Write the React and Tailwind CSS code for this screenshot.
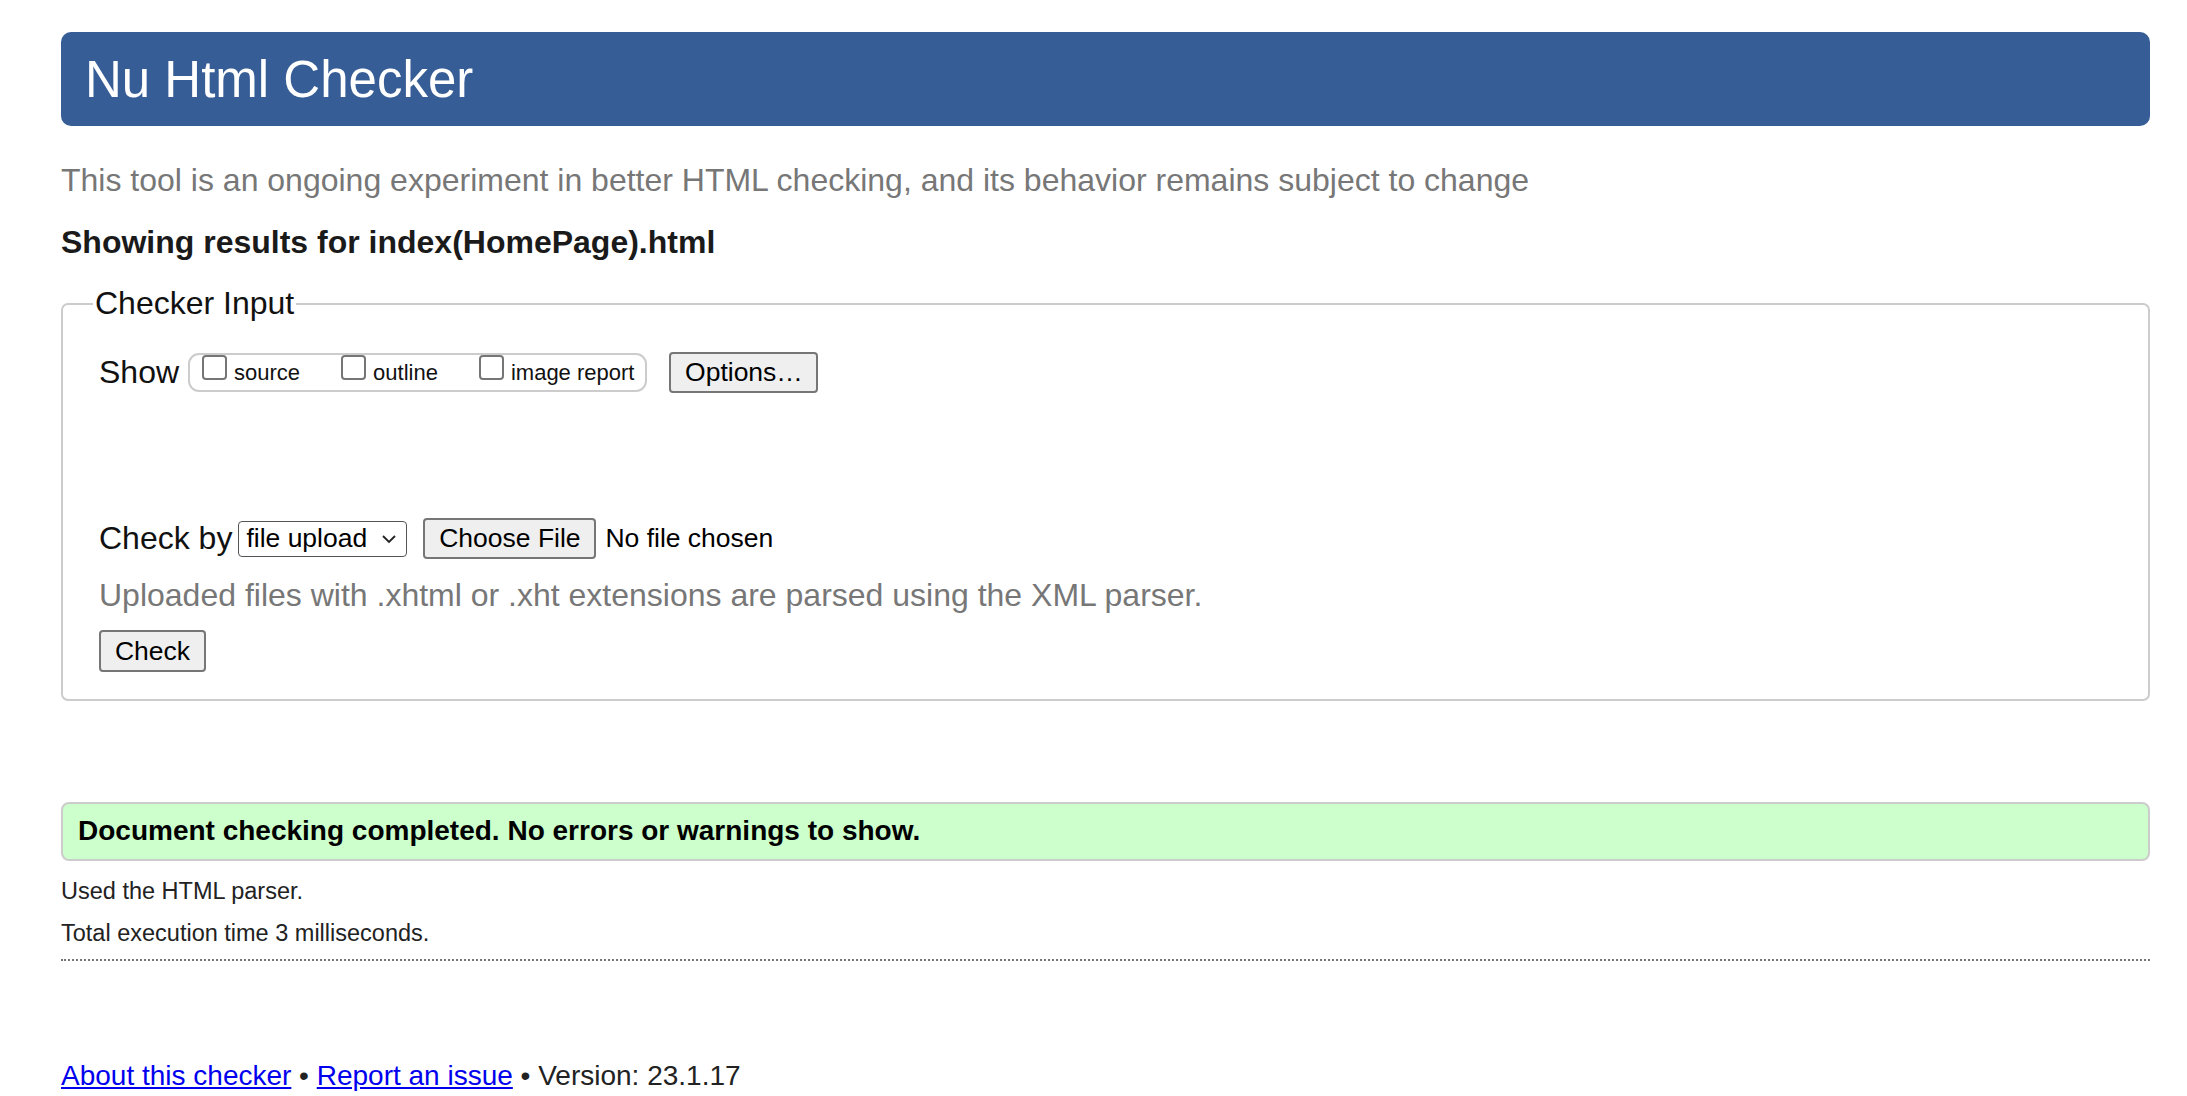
import React from "react";

function Box({ label }) {
  return (
    <span className="flex items-baseline gap-[7px]">
      <span className="inline-block w-[25px] h-[25px] border-2 border-[#767676] rounded-[4px] bg-white"></span>
      <span className="text-[22px] leading-[26px] text-[#111]">{label}</span>
    </span>
  );
}

function Btn({ children, className = "" }) {
  return (
    <button
      type="button"
      className={
        "h-[41px] border-2 border-[#767676] rounded-[4px] bg-[#efefef] text-[26.5px] leading-none text-black flex items-center justify-center " +
        className
      }
    >
      {children}
    </button>
  );
}

export default function App() {
  return (
    <div className="min-h-[1096px] bg-white pl-[61px] pr-[37px] pt-[32px] font-['Liberation_Sans',Arial,sans-serif] text-[#222]">
      <div className="h-[94px] rounded-[10px] bg-[#365d95] flex items-center pl-[24px]">
        <h1 className="text-[51px] leading-none text-white">Nu Html Checker</h1>
      </div>

      <p className="mt-[36px] text-[32px] leading-[37px] text-[#777]">
        This tool is an ongoing experiment in better HTML checking, and its behavior remains subject to change
      </p>

      <p className="mt-[25px] text-[32px] leading-[37px] font-bold text-[#1a1a1a]">
        Showing results for index(HomePage).html
      </p>

      <fieldset className="mt-[24px] border-2 border-[#cccccc] rounded-[7px] px-[30px] pt-[30px] pb-[27px]">
        <legend className="px-[2px] text-[32px] leading-[37px] text-[#111]">Checker Input</legend>
        <div className="pl-[6px]">
          <div className="flex items-center h-[41px]">
            <span className="text-[32px] leading-[37px] text-[#111]">Show</span>
            <div className="ml-[9px] h-[39px] border-2 border-[#cccccc] rounded-[11px] flex items-start pl-[12px] pr-[11px] gap-[41px]">
              <Box label="source" />
              <Box label="outline" />
              <Box label="image report" />
            </div>
            <Btn className="ml-[22px] w-[149px]">Options…</Btn>
          </div>

          <div className="mt-[125px] flex items-center h-[41px]">
            <span className="text-[32px] leading-[37px] text-[#111]">Check by</span>
            <div className="ml-[6px] h-[36px] w-[169px] border-[1.5px] border-[#555] rounded-[4px] bg-white flex items-center pl-[7px] pr-[8px] justify-between">
              <span className="text-[26.5px] leading-none text-black">file upload</span>
              <svg width="16" height="10" viewBox="0 0 16 10" className="mr-[1px]">
                <path d="M2 2 L8 8 L14 2" fill="none" stroke="#222" strokeWidth="1.8" />
              </svg>
            </div>
            <Btn className="ml-[16px] w-[173px]">Choose File</Btn>
            <span className="ml-[9px] text-[26.5px] leading-none text-black">No file chosen</span>
          </div>

          <p className="mt-[18px] text-[32px] leading-[37px] text-[#777]">
            Uploaded files with .xhtml or .xht extensions are parsed using the XML parser.
          </p>

          <Btn className="mt-[16px] w-[107px] h-[42px]">Check</Btn>
        </div>
      </fieldset>

      <div className="mt-[101px] h-[59px] border-2 border-[#cccccc] rounded-[8px] bg-[#ccffcc] flex items-center pl-[15px]">
        <span className="text-[28px] leading-none font-bold text-black -mt-[2px]">
          Document checking completed. No errors or warnings to show.
        </span>
      </div>

      <p className="mt-[16px] text-[23.5px] leading-[28px] text-[#222]">Used the HTML parser.</p>
      <p className="mt-[14px] text-[23.5px] leading-[28px] text-[#222]">Total execution time 3 milliseconds.</p>

      <div className="mt-[12px] border-b-2 border-dotted border-[#777]"></div>

      <p className="mt-[98px] text-[28px] leading-[33px] text-[#222]">
        <a href="#" className="text-[#0000ee] underline">About this checker</a>
        {" • "}
        <a href="#" className="text-[#0000ee] underline">Report an issue</a>
        {" • Version: 23.1.17"}
      </p>
    </div>
  );
}
